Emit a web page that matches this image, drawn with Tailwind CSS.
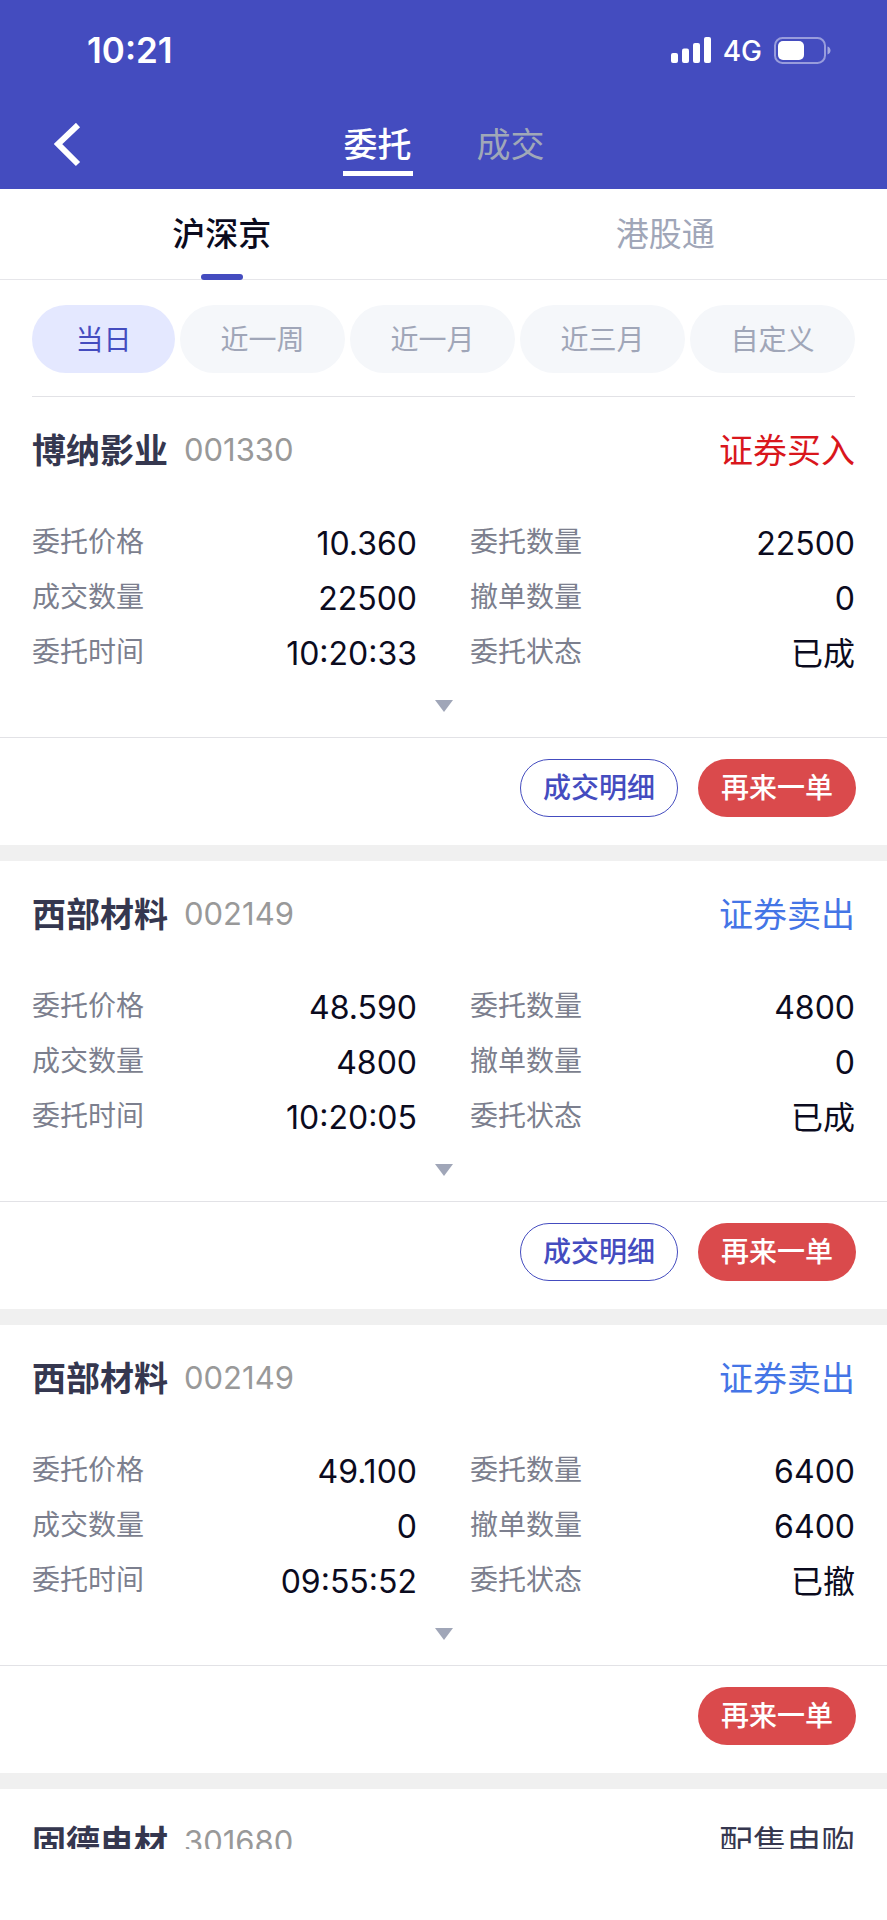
<!DOCTYPE html>
<html lang="zh-CN">
<head>
  <meta charset="UTF-8" />
  <meta name="viewport" content="width=device-width, initial-scale=1.0" />
  <title>委托查询</title>
  <script src="https://cdn.jsdelivr.net/npm/@tailwindcss/browser@4"></script>
  <style>
    body {
      font-family: 'Inter', 'Noto Sans CJK SC', sans-serif;
    }
  </style>
</head>
<body class="h-screen flex flex-col bg-white text-[#0b0b1e]">

  <!-- Header -->
  <header class="shrink-0 bg-[#444cbf] text-white">
    <div class="h-[100px] pl-[87px] pr-14 flex items-center justify-between">
      <span class="text-[35px] font-semibold">10:21</span>
      <div class="flex items-center gap-3">
        <svg class="w-10 h-[26px]" viewBox="0 0 40 26" fill="currentColor" aria-hidden="true">
          <rect x="0" y="16" width="7" height="10" rx="2" />
          <rect x="11" y="11.5" width="7" height="14.5" rx="2" />
          <rect x="22" y="6" width="7" height="20" rx="2" />
          <rect x="33" y="0" width="7" height="26" rx="2" />
        </svg>
        <span class="pt-0.5 text-[28px] font-medium">4G</span>
        <svg class="w-[57px] h-[27px]" viewBox="0 0 57 27" fill="none" aria-hidden="true">
          <rect x="1" y="1" width="50" height="25" rx="7.5" stroke="#fff" stroke-opacity=".45" stroke-width="2" />
          <rect x="4" y="4" width="26" height="19" rx="5" fill="#fff" />
          <path d="M53.500 9.500c2 .6 3 2.200 3 4s-1 3.400-3 4z" fill="#fff" fill-opacity=".5" />
        </svg>
      </div>
    </div>

    <div class="h-[89px] px-[54px] grid grid-cols-[1fr_auto_1fr] items-center">
      <button class="w-7 h-11" aria-label="返回">
        <svg class="w-7 h-11" viewBox="0 0 28 44" fill="none" stroke="currentColor" stroke-width="6" aria-hidden="true">
          <path d="M24 2 4 21l20 20" />
        </svg>
      </button>
      <nav class="h-full flex gap-16 text-[34px] leading-[54px]">
        <a href="#orders" class="mt-[18px] h-[58px] px-px border-b-[5px] border-white font-medium">委托</a>
        <a href="#deals" class="mt-[18px] h-[58px] text-[#a0a8b8]">成交</a>
      </nav>
    </div>
  </header>

  <!-- Market tabs -->
  <nav class="shrink-0 h-[91px] grid grid-cols-2 border-b border-[#e6e6ea] text-[33px]">
    <a href="#hsj" class="relative pt-0.5 flex items-center justify-center font-medium">
      沪深京
      <span class="absolute left-1/2 -bottom-px w-[42px] h-[6px] -translate-x-1/2 rounded-sm bg-[#444cbf]"></span>
    </a>
    <a href="#ggt" class="pt-0.5 flex items-center justify-center text-[#a0a6b8]">港股通</a>
  </nav>

  <!-- Date filter -->
  <div class="shrink-0 mx-8 pt-[25px] pb-[23px] border-b border-[#e2e2e6]">
    <div class="grid grid-cols-[143fr_165fr_165fr_165fr_165fr] gap-[5px] text-[28px] text-[#a0a6b8]">
      <button class="h-[68px] pt-0.5 rounded-full bg-[#e4e8ff] text-[#444cbf]">当日</button>
      <button class="h-[68px] pt-0.5 rounded-full bg-[#f5f7fa]">近一周</button>
      <button class="h-[68px] pt-0.5 rounded-full bg-[#f5f7fa]">近一月</button>
      <button class="h-[68px] pt-0.5 rounded-full bg-[#f5f7fa]">近三月</button>
      <button class="h-[68px] pt-0.5 rounded-full bg-[#f5f7fa]">自定义</button>
    </div>
  </div>

  <!-- Orders -->
  <main id="orderList" class="flex-1 min-h-0 overflow-hidden"></main>

  <!-- Home indicator area -->
  <footer class="shrink-0 h-[71px] bg-white"></footer>

  <script>
    const orders = [
      { name: '博纳影业', code: '001330', type: '证券买入', color: 'text-[#d9161c]', price: '10.360', amount: '22500', deal: '22500', cancel: '0', time: '10:20:33', status: '已成', detail: true },
      { name: '西部材料', code: '002149', type: '证券卖出', color: 'text-[#4475e6]', price: '48.590', amount: '4800', deal: '4800', cancel: '0', time: '10:20:05', status: '已成', detail: true },
      { name: '西部材料', code: '002149', type: '证券卖出', color: 'text-[#4475e6]', price: '49.100', amount: '6400', deal: '0', cancel: '6400', time: '09:55:52', status: '已撤', detail: false },
      { name: '固德电材', code: '301680', type: '配售申购', color: 'text-[#35374f]' }
    ];

    function field(label, value) {
      return `
        <div class="h-[55px] flex items-center justify-between">
          <dt class="text-[28px] text-[#7c7f8e]">${label}</dt>
          <dd class="pt-1 text-[32px]">${value}</dd>
        </div>`;
    }

    function details(o) {
      return `
        <dl class="px-8 pt-[11px] grid grid-cols-2 gap-x-[53px]">
          ${field('委托价格', o.price)}
          ${field('委托数量', o.amount)}
          ${field('成交数量', o.deal)}
          ${field('撤单数量', o.cancel)}
          ${field('委托时间', o.time)}
          ${field('委托状态', o.status)}
        </dl>
        <button class="w-full h-[58px] pb-1 flex items-center justify-center" aria-label="展开">
          <svg class="w-[18px] h-3" viewBox="0 0 18 12" fill="#a0a6b8" aria-hidden="true"><path d="M0 0h18L9 12z" /></svg>
        </button>
        <div class="pl-8 pr-[31px] pt-[21px] pb-7 flex justify-end gap-5 border-t border-[#e2e2e6] text-[28px] font-medium">
          ${o.detail ? '<button class="w-[158px] h-[58px] rounded-full border border-[#444cbf] text-[#444cbf]">成交明细</button>' : ''}
          <button class="w-[158px] h-[58px] rounded-full bg-[#da4a4c] text-white">再来一单</button>
        </div>`;
    }

    document.getElementById('orderList').innerHTML = orders.map(o => `
      <article class="border-b-[16px] border-[#f0f0f0]">
        <div class="h-[106px] px-8 flex items-center">
          <h2 class="text-[34px] font-bold text-[#35374f]">${o.name}</h2>
          <span class="ml-4 text-[31px] text-[#999]">${o.code}</span>
          <span class="ml-auto text-[34px] ${o.color}">${o.type}</span>
        </div>
        ${o.price ? details(o) : ''}
      </article>`).join('');
  </script>

</body>
</html>
